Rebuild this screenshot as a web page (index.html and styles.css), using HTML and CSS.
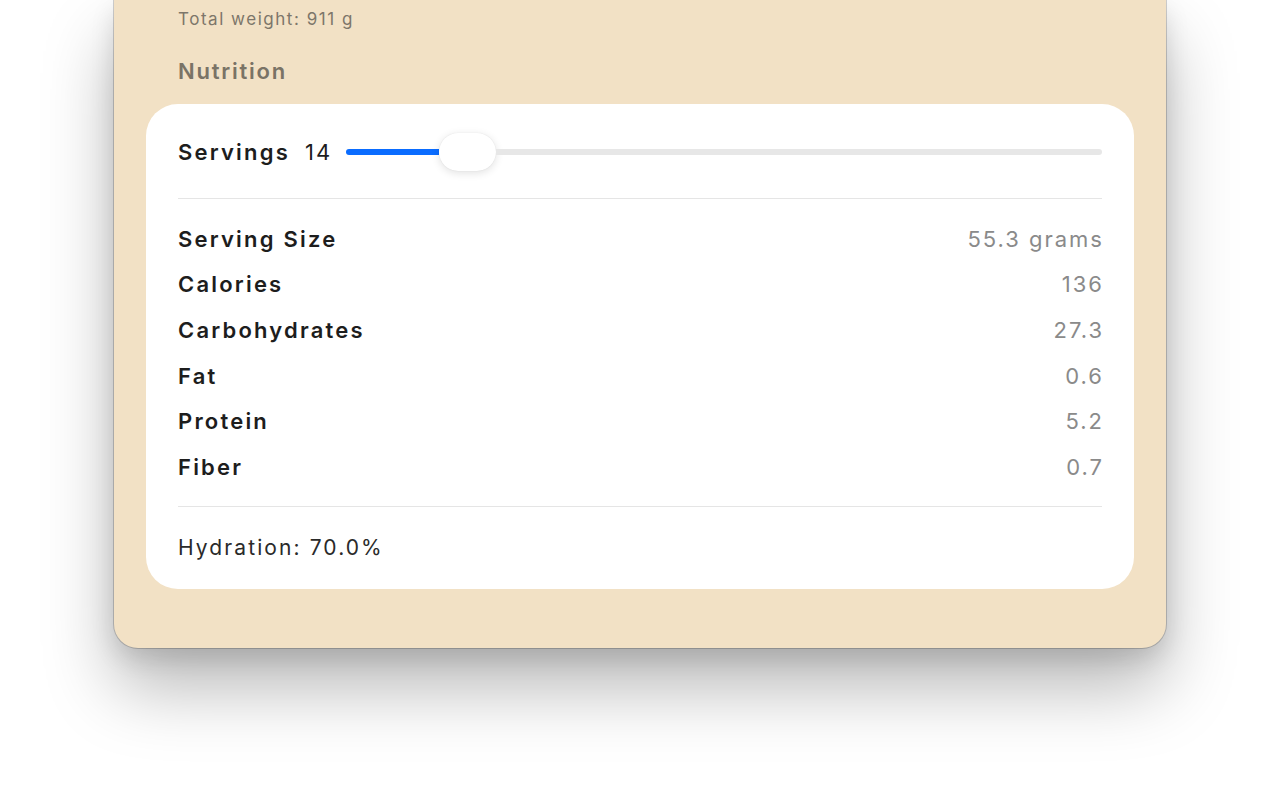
FILE: index.html
```html
<!DOCTYPE html>
<html>
<head>
<meta charset="utf-8">
<link rel="stylesheet" href="styles.css">
</head>
<body>
<div class="window">
  <div class="total">Total weight: 911 g</div>
  <div class="section-title">Nutrition</div>
  <div class="card">
    <div class="servings">
      <span class="label">Servings</span>
      <span class="count">14</span>
      <div class="slider">
        <div class="fill" style="width: 93px"></div>
        <div class="thumb"></div>
        <div class="rest"></div>
      </div>
    </div>
    <div class="divider"></div>
    <div class="rows">
      <div class="row"><span class="label">Serving Size</span><span class="value">55.3 grams</span></div>
      <div class="row"><span class="label">Calories</span><span class="value">136</span></div>
      <div class="row"><span class="label">Carbohydrates</span><span class="value">27.3</span></div>
      <div class="row"><span class="label">Fat</span><span class="value">0.6</span></div>
      <div class="row"><span class="label">Protein</span><span class="value">5.2</span></div>
      <div class="row"><span class="label">Fiber</span><span class="value">0.7</span></div>
    </div>
    <div class="divider"></div>
    <div class="hydration">Hydration: 70.0%</div>
  </div>
</div>
</body>
</html>
```

FILE: styles.css
```css
html, body {
  margin: 0;
  padding: 0;
  background: #ffffff;
  height: 100%;
  overflow: hidden;
}
body {
  font-family: Inter, "Noto Sans", sans-serif;
  padding-left: 114px;
}
.window {
  width: 1052px;
  height: 648px;
  box-sizing: border-box;
  background: #f2e1c5;
  border-radius: 0 0 24px 24px;
  box-shadow: 0 0 0 1px rgba(0,0,0,0.18), 0 40px 70px rgba(0,0,0,0.28), 0 10px 24px rgba(0,0,0,0.12);
  padding: 8px 32px 0 32px;
  display: flex;
  flex-direction: column;
}
.total {
  font-size: 17px;
  letter-spacing: 0.09em;
  line-height: 22px;
  color: #7d766a;
  padding-left: 32px;
}
.section-title {
  font-size: 22px;
  font-weight: 600;
  letter-spacing: 0.08em;
  line-height: 26px;
  color: #7a7366;
  padding-left: 32px;
  margin-top: 28px;
}
.card {
  margin-top: 20px;
  background: #ffffff;
  border-radius: 32px;
  padding: 29px 32px 0 32px;
  height: 485px;
  box-sizing: border-box;
}
.servings {
  display: flex;
  align-items: center;
  height: 38px;
}
.label {
  font-size: 22px;
  font-weight: 600;
  letter-spacing: 0.1em;
  color: #1d1d1d;
}
.count {
  font-size: 22px;
  letter-spacing: 0.09em;
  color: #1d1d1d;
  margin-left: 15px;
  margin-right: 14px;
}
.slider {
  flex: 1;
  display: flex;
  align-items: center;
  height: 38px;
}
.fill {
  height: 6px;
  background: #0a6cff;
  border-radius: 3px 0 0 3px;
}
.thumb {
  width: 57px;
  height: 38px;
  border-radius: 19px;
  background: #ffffff;
  box-shadow: 0 2px 8px rgba(0,0,0,0.12), 0 0 1px rgba(0,0,0,0.12);
  flex: none;
}
.rest {
  flex: 1;
  height: 6px;
  background: #e7e7e7;
  border-radius: 0 3px 3px 0;
}
.divider {
  height: 1px;
  background: #e5e5e5;
}
.servings + .divider {
  margin-top: 27px;
}
.rows {
  padding: 17px 0 16px 0;
}
.row {
  display: flex;
  justify-content: space-between;
  align-items: center;
  height: 45.6px;
}
.value {
  font-size: 22px;
  letter-spacing: 0.09em;
  margin-right: -0.09em;
  color: #8a8a8a;
}
.hydration {
  padding-top: 29px;
  font-size: 21px;
  letter-spacing: 0.1em;
  line-height: 24px;
  color: #2a2a2a;
}
```
